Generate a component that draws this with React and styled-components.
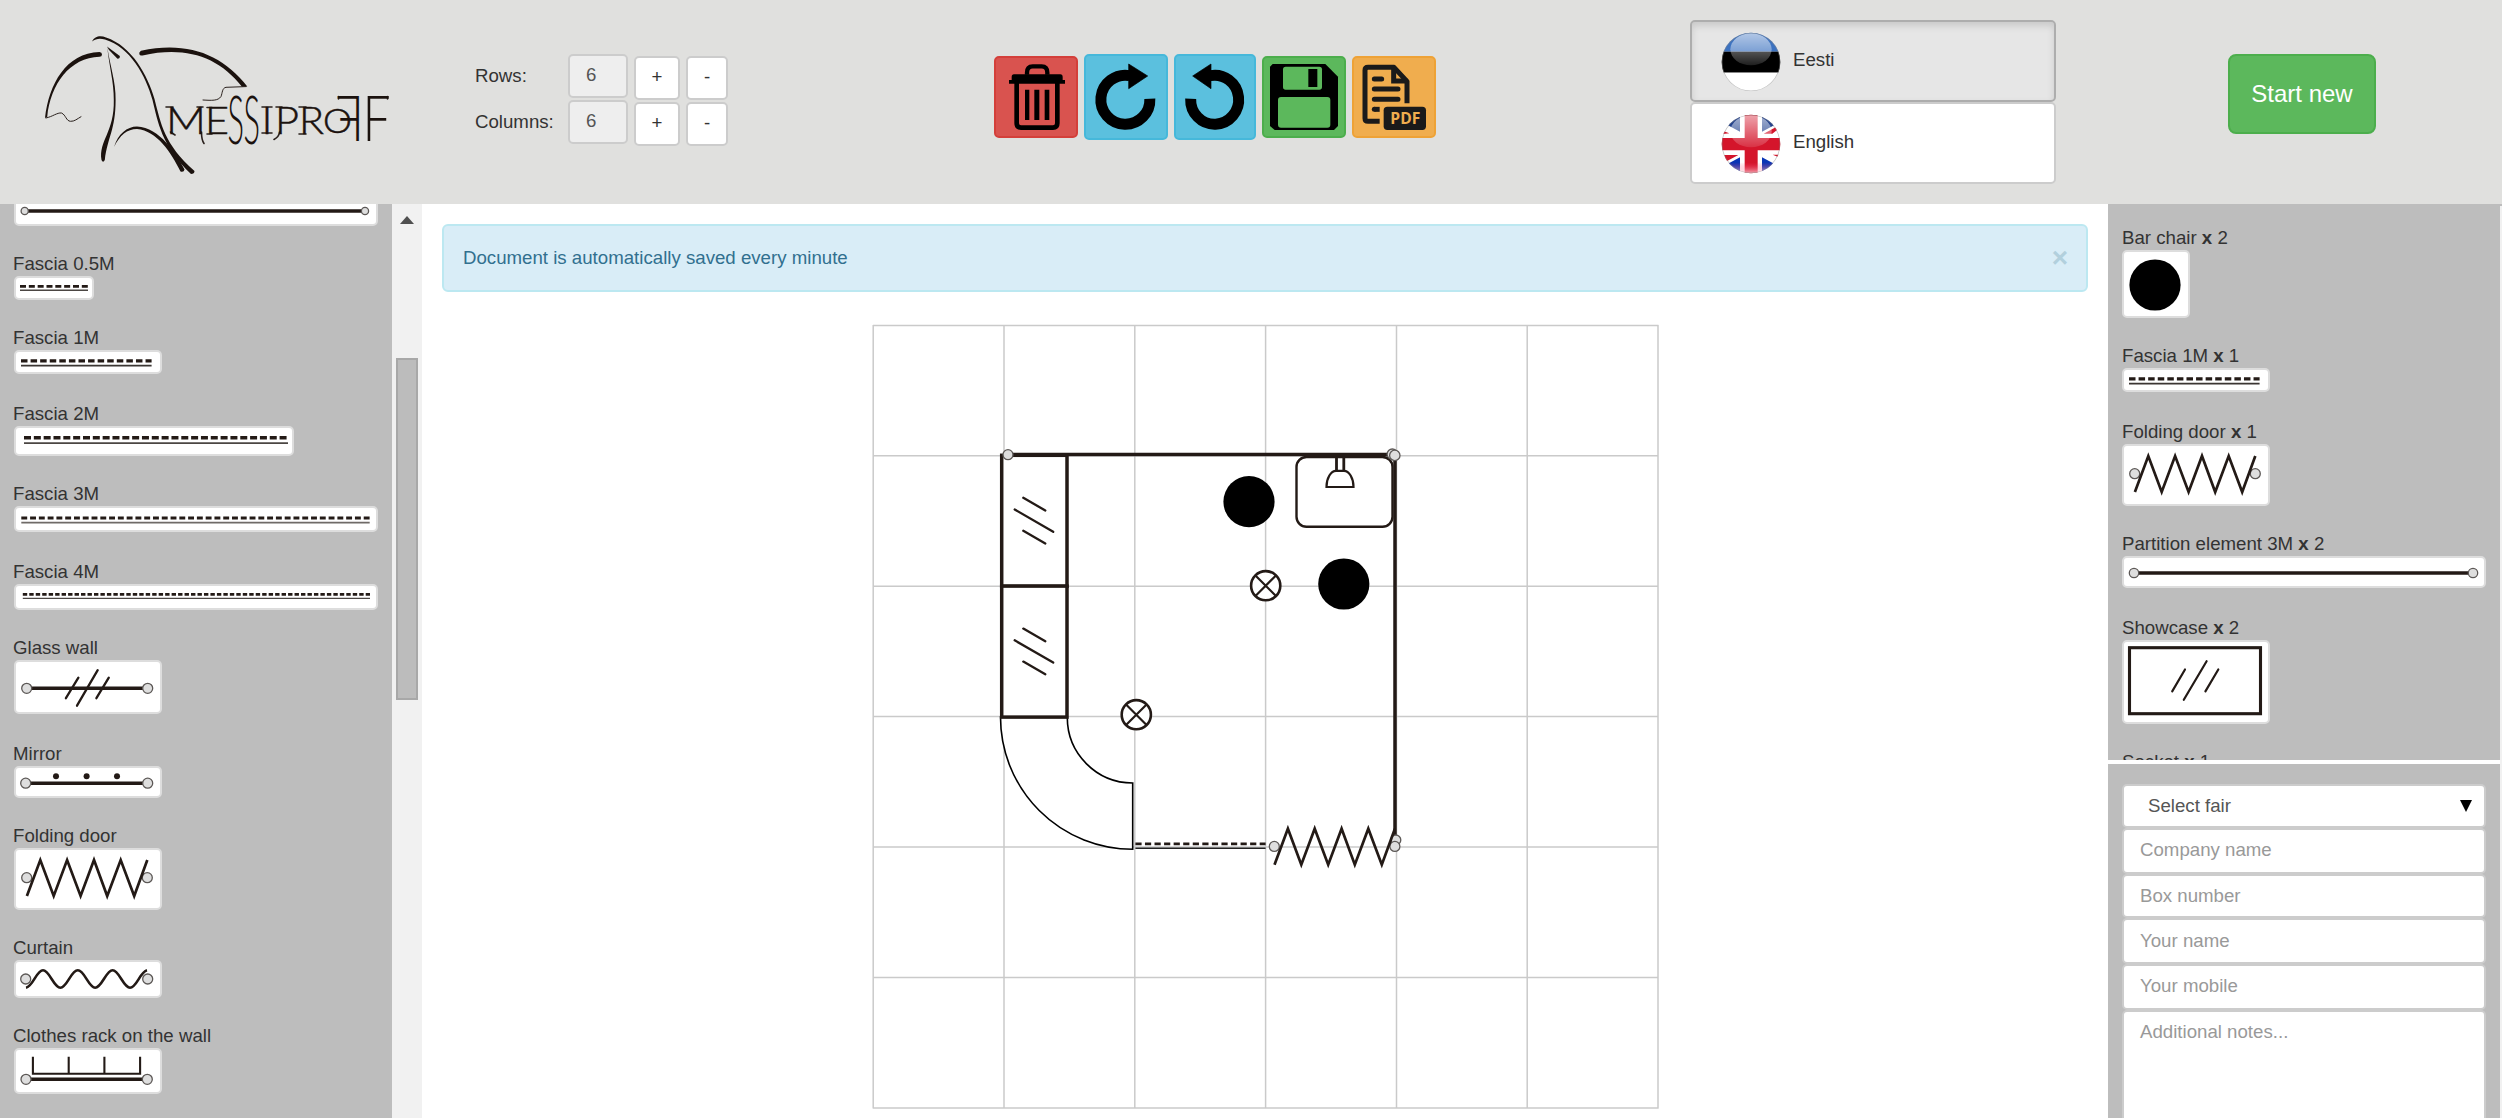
import React from 'react';
import styled, { createGlobalStyle, css } from 'styled-components';

const INK = '#231a16';

const GlobalStyle = createGlobalStyle`
  *, *::before, *::after { box-sizing: border-box; }
  html, body { margin: 0; padding: 0; overflow: hidden; }
  body {
    background: #fff;
    color: #333;
    font-family: "Liberation Sans", Arial, sans-serif;
    font-size: 18.67px;
    line-height: 26px;
  }
  svg { display: block; flex: none; }
`;

const Page = styled.div`
  display: flex;
  flex-direction: column;
  width: 100vw;
  height: 100vh;
  overflow: hidden;
`;

/* ---------- header ---------- */

const Header = styled.header`
  display: grid;
  grid-template-columns: 475px 519px 696px 538px 1fr;
  align-items: start;
  flex: none;
  height: 204px;
  background: #e0e0de;
`;

const SizeControls = styled.div`
  display: grid;
  grid-template-columns: 87px 60px 46px 42px;
  grid-auto-rows: 46px;
  column-gap: 6px;
  align-items: start;
  padding-top: 54px;
`;

const SizeLabel = styled.label`
  line-height: 43px;
`;

const SizeInput = styled.input`
  width: 60px;
  height: 44px;
  padding: 0 16px 2px;
  border: 2px solid #ccc;
  border-radius: 5px;
  background: #eee;
  color: #555;
  font: inherit;
  outline: none;
`;

const StepButton = styled.button`
  height: 44px;
  margin-top: 2px;
  padding: 0 0 2px;
  border: 2px solid #ccc;
  border-radius: 5px;
  background: #fff;
  color: #333;
  font: inherit;
`;

const Toolbar = styled.div`
  display: flex;
  align-items: center;
  gap: 6px;
  padding-top: 54px;
`;

const tones = {
  danger: css`background: #d9534f; border-color: #d43f3a;`,
  info: css`background: #5bc0de; border-color: #46b8da;`,
  success: css`background: #5cb85c; border-color: #4cae4c;`,
  warning: css`background: #f0ad4e; border-color: #eea236;`,
};

const ToolButton = styled.button`
  padding: 0;
  border: 2px solid;
  border-radius: 5px;
  ${(p) => tones[p.$tone]}
`;

const Languages = styled.div`
  display: flex;
  flex-direction: column;
  width: 366px;
  padding-top: 20px;
`;

const LanguageButton = styled.button`
  display: flex;
  align-items: center;
  gap: 12px;
  height: 82px;
  padding: 1px 0 0 29px;
  border: 2px solid ${(p) => (p.$active ? '#adadad' : '#ccc')};
  border-radius: 5px;
  background: ${(p) => (p.$active ? '#e6e6e6' : '#fff')};
  box-shadow: ${(p) => (p.$active ? 'inset 0 4px 7px rgba(0,0,0,.125)' : 'none')};
  color: #333;
  font: inherit;
`;

const LanguageName = styled.span`
  padding-bottom: 4px;
`;

const StartButton = styled.button`
  width: 148px;
  height: 80px;
  margin-top: 54px;
  padding: 0;
  border: 2px solid #4cae4c;
  border-radius: 8px;
  background: #5cb85c;
  color: #fff;
  font: inherit;
  font-size: 24px;
`;

/* ---------- body ---------- */

const Body = styled.div`
  display: flex;
  flex: 1;
  min-height: 0;
`;

const Sidebar = styled.aside`
  display: flex;
  flex-direction: column;
  flex: none;
  width: 392px;
  overflow: hidden;
`;

const Panel = styled.section`
  flex: ${(p) => (p.$height ? 'none' : 1)};
  height: ${(p) => (p.$height ? p.$height + 'px' : 'auto')};
  padding: ${(p) => p.$pad};
  background: #bdbdbd;
  overflow: hidden;
`;

const Divider = styled.div`
  flex: none;
  height: 4px;
  background: #fff;
`;

const List = styled.ul`
  list-style: none;
  margin: ${(p) => (p.$scrolled ? '-10px' : 0)} 0 0;
  padding: 0;
`;

const Item = styled.li`
  margin-bottom: ${(p) => p.$gap}px;
`;

const ItemLabel = styled.div`
  height: 26px;
  margin-left: ${(p) => (p.$counted ? 0 : '-1px')};
  line-height: 28px;
  white-space: nowrap;
`;

const Thumb = styled.div`
  width: ${(p) => p.$w}px;
  height: ${(p) => p.$h}px;
  border: 2px solid #ddd;
  border-radius: 5px;
  background: #fff;
  overflow: hidden;
`;

const Scrollbar = styled.div`
  display: flex;
  flex-direction: column;
  align-items: center;
  flex: none;
  width: 30px;
  padding-top: 12px;
  background: #f1f1f1;
`;

const ScrollThumb = styled.div`
  width: 22px;
  height: 342px;
  margin-top: 134px;
  border: 2px solid #a8a8a8;
  background: #bcbcbc;
`;

const Workspace = styled.main`
  display: flex;
  flex-direction: column;
  align-items: center;
  flex: 1;
  min-width: 0;
  padding: 20px 20px 0;
  background: #fff;
`;

const Alert = styled.div`
  display: flex;
  align-items: center;
  justify-content: space-between;
  align-self: stretch;
  flex: none;
  height: 68px;
  margin-bottom: 28px;
  padding: 0 18px 0 19px;
  border: 2px solid #bce8f1;
  border-radius: 6px;
  background: #d9edf7;
  color: #31708f;
`;

const CloseButton = styled.button`
  padding: 0;
  border: 0;
  background: none;
  color: #b2d0dd;
  font: bold 28px/28px "Liberation Sans", Arial, sans-serif;
`;

const PageEdge = styled.div`
  flex: none;
  width: 2px;
  background: #f1f1f1;
  border-top: 2px solid #bdbdbd;
`;

/* ---------- form ---------- */

const control = css`
  display: block;
  width: 364px;
  height: ${(p) => p.$h}px;
  border: 2px solid #ccc;
  border-radius: 5px;
  background: #fff;
  color: #555;
  font: inherit;
  outline: none;
  &::placeholder { color: #999; opacity: 1; }
`;

const Field = styled.input`
  ${control}
  padding: 0 16px ${(p) => (p.$low ? 0 : 2)}px;
`;

const Notes = styled.textarea`
  ${control}
  padding: 7px 16px;
  resize: none;
`;

const FairSelect = styled.button`
  ${control}
  display: flex;
  align-items: center;
  justify-content: space-between;
  padding: 0 12px 0 24px;
`;

/* ---------- drawing primitives ---------- */

const Joint = ({ x, y, r = 5 }) => (
  <circle cx={x} cy={y} r={r} fill="#dedede" stroke="#5c5856" strokeWidth="1.3" />
);

const Wall = ({ x1, x2, y, r }) => (
  <>
    <path d={`M${x1} ${y}H${x2}`} stroke={INK} strokeWidth="3.4" />
    <Joint x={x1} y={y} r={r} />
    <Joint x={x2} y={y} r={r} />
  </>
);

const Fascia = ({ x1, x2, y, base, dash, pitch, t = 2.8, line = 1.5, tone = '#4b4643' }) => (
  <>
    <path d={`M${x1} ${y}H${x2}`} stroke={INK} strokeWidth={t} strokeDasharray={`${dash} ${pitch - dash}`} />
    <path d={`M${x1} ${base}H${x2}`} stroke={tone} strokeWidth={line} />
  </>
);

const FoldingDoor = () => (
  <>
    <Joint x={12.7} y={29.7} />
    <Joint x={133.3} y={29.7} />
    <path
      d="M12.9 48L26.3 12L39.7 48L53.1 12L66.6 48L80 12L93.2 48L106.7 12L120.2 48L133.3 12"
      fill="none" stroke={INK} strokeWidth="2.7" strokeMiterlimit="10"
    />
  </>
);

const drawings = {
  wallLong: <Wall x1={10.7} x2={351} y={17} r={3.6} />,
  fascia05: <Fascia x1={6} x2={74} y={10.4} base={14.2} dash={6} pitch={8.83} t={2.6} line={1.5} />,
  fascia1: <Fascia x1={7} x2={137.6} y={10.8} base={15.7} dash={6.5} pitch={9.58} t={3.2} line={1.8} tone="#3a3532" />,
  fascia2: <Fascia x1={10} x2={274} y={11.7} base={17.1} dash={7} pitch={9.83} t={3.5} line={1.6} />,
  fascia3: <Fascia x1={7.3} x2={355.7} y={12} base={16.7} dash={5.9} pitch={8.78} t={3.2} line={1.8} tone="#6f6a67" />,
  fascia4: <Fascia x1={8.8} x2={356} y={10.4} base={14.4} dash={4.4} pitch={6.47} t={2.7} line={1.4} />,
  glass: (
    <>
      <Wall x1={12.7} x2={133.7} y={28.3} />
      <path d="M51.9 38.2L64.4 17.7M63 45.7L83.7 10.2M82.4 38.2L94.8 17.7" stroke={INK} strokeWidth="2.3" strokeLinecap="round" />
    </>
  ),
  mirror: (
    <>
      <Wall x1={11.7} x2={133.7} y={17.2} />
      {[42, 72.6, 103].map((x) => <circle key={x} cx={x} cy={10.2} r="3" fill={INK} />)}
    </>
  ),
  folding: <FoldingDoor />,
  curtain: (
    <>
      <Joint x={11.7} y={19} />
      <Joint x={133.7} y={19} />
      <path
        d="M12 27.7C19 26.5 22.5 10.3 29 10.3S39.8 27.7 46.4 27.7S57 10.3 63.8 10.3S74.6 27.7 81.2 27.7S92 10.3 98.6 10.3S109.4 27.7 116 27.7S126 12 133 10.3"
        fill="none" stroke={INK} strokeWidth="2.6"
      />
    </>
  ),
  rack: (
    <>
      <path d="M18.9 8.7V25.7H126.1V8.7M54.7 8.7V25.7M90.4 8.7V25.7" fill="none" stroke={INK} strokeWidth="2.1" />
      <Wall x1={12} x2={133.3} y={31.3} />
    </>
  ),
  chair: <circle cx="33" cy="35" r="25.6" fill="#000" />,
  wall3: <Wall x1={12} x2={351} y={17} r={4.7} />,
  showcase: (
    <>
      <rect x="7.5" y="7.7" width="131" height="66" fill="none" stroke={INK} strokeWidth="3.1" />
      <path d="M50.2 51.4L63 29.5M61.8 59.8L84.6 21.2M83.4 51.4L96.3 29.5" stroke={INK} strokeWidth="2.2" strokeLinecap="round" />
    </>
  ),
};

const palette = [
  { art: 'wallLong', w: 364, h: 32, gap: 24 },
  { name: 'Fascia 0.5M', art: 'fascia05', w: 80, h: 24, gap: 24 },
  { name: 'Fascia 1M', art: 'fascia1', w: 148, h: 24, gap: 26 },
  { name: 'Fascia 2M', art: 'fascia2', w: 280, h: 30, gap: 24 },
  { name: 'Fascia 3M', art: 'fascia3', w: 364, h: 26, gap: 26 },
  { name: 'Fascia 4M', art: 'fascia4', w: 364, h: 26, gap: 24 },
  { name: 'Glass wall', art: 'glass', w: 148, h: 54, gap: 26 },
  { name: 'Mirror', art: 'mirror', w: 148, h: 32, gap: 24 },
  { name: 'Folding door', art: 'folding', w: 148, h: 62, gap: 24 },
  { name: 'Curtain', art: 'curtain', w: 148, h: 38, gap: 24 },
  { name: 'Clothes rack on the wall', art: 'rack', w: 148, h: 46, gap: 24 },
];

const used = [
  { name: 'Bar chair', count: 2, art: 'chair', w: 68, h: 68, gap: 24 },
  { name: 'Fascia 1M', count: 1, art: 'fascia1', w: 148, h: 24, gap: 26 },
  { name: 'Folding door', count: 1, art: 'folding', w: 148, h: 62, gap: 24 },
  { name: 'Partition element 3M', count: 2, art: 'wall3', w: 364, h: 32, gap: 26 },
  { name: 'Showcase', count: 2, art: 'showcase', w: 148, h: 84, gap: 24 },
  { name: 'Socket', count: 1 },
];

const PartList = ({ parts, scrolled }) => (
  <List $scrolled={scrolled}>
    {parts.map((p, i) => (
      <Item key={i} $gap={p.gap || 0}>
        {p.name && (
          <ItemLabel $counted={!!p.count}>
            {p.name}
            {p.count && <> <b>x</b> {p.count}</>}
          </ItemLabel>
        )}
        {p.art && (
          <Thumb $w={p.w} $h={p.h}>
            <svg width={p.w - 4} height={p.h - 4} viewBox={`2 2 ${p.w - 4} ${p.h - 4}`}>
              {drawings[p.art]}
            </svg>
          </Thumb>
        )}
      </Item>
    ))}
  </List>
);

/* ---------- logo and icons ---------- */

const Letter = ({ x, y = 134, w, size = 37.5, weight = 300, heavy, children }) => (
  <text
    x={x} y={y} fontSize={size} fontWeight={weight}
    stroke="#1b120e" strokeWidth={heavy ? 0.5 : 0}
    textLength={w} lengthAdjust="spacingAndGlyphs"
  >
    {children}
  </text>
);

const Logo = () => (
  <svg width="420" height="204" viewBox="0 0 420 204">
    <g fill="#1b120e">
      <path d="M45 118C49 84 66 53 99.500 52Q102 52.300 102 54.500T99.500 56.800C70 57.500 50.500 84 47.200 117Z" />
      <path d="M141 50.800Q138.800 52 139.300 54T142.500 55.400C185 46 218 56 242 86.800L247.300 86.600C222 54 187 41 141 50.800Z" />
      <path d="M92 41.500C95 35.500 101 35.500 106 37.500C132 46 148 76 154.500 99C161 124 164 144 194.500 171Q194.500 174 191 174C161 145 158 122 152.500 100C146 76 130 47 105 39.500C100 38.300 96 38.500 92 41.500Z" />
      <path d="M107.300 47C110 66 116 82 115.600 100C115.600 130 107.500 137 104.800 160Q103 163.500 101.500 160C98.500 141 114.500 132 113.800 100C114 82 109 66 107.300 47Z" />
      <path d="M107 46.500L119.800 56Q120.300 58.500 117.500 58.800L109 50Z" />
      <path d="M114 147C118 134 127 126.500 137 126.500C160 128 176 153 184.500 169.500Q184 172.500 180.500 171.500C171 152 157 131 137 129C127 129 120 135 114 147Z" />
    </g>
    <g fill="none" stroke="#2a211d" strokeLinecap="round">
      <path d="M46 118C53 116.500 57 112.500 61.500 113C66 115 66 121 70.500 121.300C74.500 121.500 77 119 81 116.700" strokeWidth="1" />
      <path d="M246 86.600L226 87.300C222 88 222.500 93 221 96.500C218 101 212 100.500 203 100" strokeWidth="1" />
      <path d="M166 107H173M197 107H203M207 107.500H212M207 134H212M262 107H272M262 133H272M276 107H282M299 107H306M299 134H306" strokeWidth="1.6" />
      <path d="M170.500 132L175 135M201.500 132Q201.500 140 204 143.500M279.500 132Q279 137 274 139.500M338.500 99V96.500M387.500 99V96.500" strokeWidth="1.6" />
    </g>
    <g fill="#1b120e" fontFamily="Lato, sans-serif">
      <Letter x={166} w={40} heavy>M</Letter>
      <Letter x={205} w={24} heavy>E</Letter>
      <Letter x={227.5} y={144} w={16.5} size={67}>S</Letter>
      <Letter x={243.5} y={144} w={16.5} size={67}>S</Letter>
      <Letter x={261.5} w={11} heavy>I</Letter>
      <Letter x={275} w={24} heavy>P</Letter>
      <Letter x={299} w={25} heavy>R</Letter>
      <Letter x={323} y={132.5} w={29} size={34} heavy>O</Letter>
      <text transform="translate(364 141) scale(-1 1)" fontSize="63" fontWeight="300" textLength="28" lengthAdjust="spacingAndGlyphs">F</text>
      <Letter x={362.5} y={141} w={28} size={63}>F</Letter>
    </g>
  </svg>
);

const TrashIcon = () => (
  <svg width="80" height="78" viewBox="48 54 240 234">
    <path d="M141 104V98Q141 79 158 79H185Q202 79 202 98V104" fill="none" stroke="#000" strokeWidth="13" />
    <path d="M102 103H241Q248 103 248 111V120H255V131H87V120H95V111Q95 103 102 103Z" />
    <path d="M110 128V250Q110 263 123 263H219Q232 263 232 250V128" fill="none" stroke="#000" strokeWidth="14" />
    <path d="M135 149h13v91h-13zM163 149h15v91h-15zM194 149h14v91h-14z" />
  </svg>
);

const RedoIcon = () => (
  <svg width="80" height="82" viewBox="318 48 240 246">
    <path d="M509.500 176A73.500 73.500 0 1 1 449 107" fill="none" stroke="#000" strokeWidth="33" />
    <path d="M446 72L503 108L446 146Z" stroke="#000" strokeLinejoin="round" strokeWidth="2" />
  </svg>
);

const UndoIcon = () => (
  <svg width="78" height="82" viewBox="588 48 234 246">
    <path d="M632 176A72 73.500 0 1 0 690 107" fill="none" stroke="#000" strokeWidth="33" />
    <path d="M693 72L638 108L693 146Z" stroke="#000" strokeLinejoin="round" strokeWidth="2" />
  </svg>
);

const SaveIcon = () => (
  <svg width="80" height="78" viewBox="852 54 240 234">
    <path d="M878 72H1036L1074 110V258L1062 270H884L870 258V80Z" />
    <rect x="909" y="80" width="117" height="69" rx="8" fill="#5cb85c" />
    <rect x="985" y="87" width="27" height="54" />
    <rect x="894" y="171" width="157" height="92" rx="9" fill="#5cb85c" />
  </svg>
);

const PdfIcon = () => (
  <svg width="80" height="78" viewBox="1122 54 240 234">
    <g fill="none" stroke="#1a1a1a" strokeWidth="15">
      <path d="M1199 244H1164Q1155 244 1155 235V91Q1155 82 1164 82H1242L1281 124V190" strokeLinejoin="round" />
      <path d="M1241 84V123H1282" />
      <path d="M1183 117H1205M1183 147H1254M1183 178H1254" strokeLinecap="round" />
      <path d="M1199 208H1183" />
    </g>
    <circle cx="1183" cy="208" r="7.500" fill="#1a1a1a" />
    <rect x="1211" y="200" width="127" height="70" rx="11" fill="#1a1a1a" />
    <text x="1231" y="252" fontFamily="'Open Sans', sans-serif" fontWeight="700" fontSize="47" textLength="90" lengthAdjust="spacingAndGlyphs" fill="#f0ad4e">PDF</text>
  </svg>
);

const FlagShine = ({ id }) => (
  <>
    <defs>
      <linearGradient id={id} x1="0" y1="0" x2="0" y2="1">
        <stop offset="0" stopColor="#fff" stopOpacity=".6" />
        <stop offset="1" stopColor="#fff" stopOpacity=".12" />
      </linearGradient>
    </defs>
    <ellipse cx="198" cy="117" rx="62" ry="48" fill={`url(#${id})`} />
    <circle cx="198" cy="155" r="87.500" fill="none" stroke="#888" strokeOpacity=".5" strokeWidth="4" />
  </>
);

const EstonianFlag = () => (
  <svg width="60" height="60" viewBox="108 65 180 180">
    <clipPath id="ee"><circle cx="198" cy="155" r="88" /></clipPath>
    <g clipPath="url(#ee)">
      <rect x="108" y="65" width="180" height="59" fill="#3c72c0" />
      <rect x="108" y="124" width="180" height="63" fill="#000" />
      <rect x="108" y="187" width="180" height="60" fill="#fff" />
      <FlagShine id="eeShine" />
    </g>
  </svg>
);

const BritishFlag = () => (
  <svg width="60" height="60" viewBox="108 65 180 180">
    <defs>
      <clipPath id="gb"><circle cx="198" cy="155" r="88" /></clipPath>
      <linearGradient id="gbGlow" x1="0" y1="0" x2="0" y2="1">
        <stop offset="0" stopColor="#ff3060" stopOpacity="0" />
        <stop offset="1" stopColor="#fff" stopOpacity=".75" />
      </linearGradient>
    </defs>
    <g clipPath="url(#gb)">
      <rect x="108" y="65" width="180" height="180" fill="#fff" />
      <path d="M126 97L165 118V66H140ZM270 97L231 118V66H256Z" fill="#1f3f8c" />
      <path d="M126 216L165 195V245H140ZM270 216L231 195V245H256Z" fill="#0a35b5" />
      <path d="M236 124L272 105L279 111L262 124ZM108 114L133 123L108 126ZM118 188H160L122 208ZM263 187H286V197Z" fill="#d4152b" />
      <path d="M179 65H218V137H288V174H218V245H179V174H108V137H179Z" fill="#d4152b" />
      <rect x="108" y="210" width="180" height="36" fill="url(#gbGlow)" />
      <FlagShine id="gbShine" />
    </g>
  </svg>
);

/* ---------- floor plan ---------- */

const gridX = [873.2, 1004, 1134.8, 1265.6, 1396.5, 1527.2, 1658];
const gridY = [325.4, 455.8, 586.2, 716.6, 847, 977.6, 1108];

const Socket = ({ x, y }) => (
  <g fill="#fff" stroke={INK} strokeWidth="2.6">
    <circle cx={x} cy={y} r="14.600" />
    <path d={`M${x - 10} ${y - 10}l20 20m0 -20l-20 20`} strokeWidth="2.2" />
  </g>
);

const Showcase = ({ y }) => (
  <g stroke={INK}>
    <rect x="1001.700" y={y} width="65.300" height="131" fill="#fff" strokeWidth="3.500" />
    <path
      d={`M1023.300 ${y + 42.500}l22 12.700M1014.700 ${y + 54.200}l38.500 22.300M1023.300 ${y + 75.500}l22 12.700`}
      strokeWidth="2.300" strokeLinecap="round"
    />
  </g>
);

const FloorPlan = () => (
  <svg width="794" height="794" viewBox="868 320 794 794">
    <path
      d={gridX.map((x) => `M${x} 325V1108.500`).join('') + gridY.map((y) => `M873 ${y}H1658.500`).join('')}
      stroke="#cacaca" strokeWidth="1.500"
    />
    <path
      d="M1000.500 717A132.300 132.300 0 0 0 1132.700 849.300V783A65.500 65.500 0 0 1 1067.300 717Z"
      fill="#fff" stroke="#000" strokeWidth="1.600"
    />
    <Showcase y={455.3} />
    <Showcase y={586.1} />
    <rect x="1296.500" y="457" width="96" height="69.800" rx="10" fill="#fff" stroke={INK} strokeWidth="2.400" />
    <path d="M1336.500 458V470M1343.800 458V470" stroke={INK} strokeWidth="2.800" />
    <path d="M1326.500 487C1326.500 478 1331 470.800 1336 470.800H1344C1349 470.800 1353.500 478 1353.500 487Z" fill="#fff" stroke={INK} strokeWidth="2.200" />
    <path d="M1008 454.500H1393" stroke={INK} strokeWidth="3.500" />
    <path d="M1395 455V840" stroke={INK} strokeWidth="3.500" />
    <Joint x={1008} y={454.7} />
    <Joint x={1392.3} y={454.2} r={5.2} />
    <Joint x={1394.8} y={455.4} r={5.2} />
    <Joint x={1395.8} y={840} />
    <circle cx="1249" cy="501.700" r="25.600" />
    <circle cx="1343.800" cy="584" r="25.600" />
    <Socket x={1265.7} y={585.7} />
    <Socket x={1136.3} y={714.7} />
    <Fascia x1={1135.4} x2={1265.6} y={843.8} base={848.3} dash={6.2} pitch={9.56} t={2.7} line={1.5} tone="#222" />
    <g transform="translate(1261.600 816.700)"><FoldingDoor /></g>
  </svg>
);

/* ---------- app ---------- */

const App = () => (
  <Page>
    <GlobalStyle />
    <Header>
      <Logo />
      <SizeControls>
        <SizeLabel>Rows:</SizeLabel>
        <SizeInput defaultValue="6" readOnly />
        <StepButton>+</StepButton>
        <StepButton>-</StepButton>
        <SizeLabel>Columns:</SizeLabel>
        <SizeInput defaultValue="6" readOnly />
        <StepButton>+</StepButton>
        <StepButton>-</StepButton>
      </SizeControls>
      <Toolbar>
        <ToolButton $tone="danger"><TrashIcon /></ToolButton>
        <ToolButton $tone="info"><RedoIcon /></ToolButton>
        <ToolButton $tone="info"><UndoIcon /></ToolButton>
        <ToolButton $tone="success"><SaveIcon /></ToolButton>
        <ToolButton $tone="warning"><PdfIcon /></ToolButton>
      </Toolbar>
      <Languages>
        <LanguageButton $active><EstonianFlag /><LanguageName>Eesti</LanguageName></LanguageButton>
        <LanguageButton><BritishFlag /><LanguageName>English</LanguageName></LanguageButton>
      </Languages>
      <StartButton>Start new</StartButton>
    </Header>
    <Body>
      <Sidebar>
        <Panel $pad="0 14px">
          <PartList parts={palette} scrolled />
        </Panel>
      </Sidebar>
      <Scrollbar>
        <svg width="14" height="8" viewBox="0 0 14 8"><path d="M7 0L14 8H0Z" fill="#505050" /></svg>
        <ScrollThumb />
      </Scrollbar>
      <Workspace>
        <Alert>
          <span>Document is automatically saved every minute</span>
          <CloseButton>×</CloseButton>
        </Alert>
        <FloorPlan />
      </Workspace>
      <Sidebar>
        <Panel $height={556} $pad="20px 14px 0">
          <PartList parts={used} />
        </Panel>
        <Divider />
        <Panel $pad="20px 14px 0">
          <FairSelect $h={44}>
            Select fair
            <svg width="12" height="12" viewBox="0 0 12 12"><path d="M0 0H12L6 12Z" /></svg>
          </FairSelect>
          <Field $h={46} placeholder="Company name" />
          <Field $h={44} $low placeholder="Box number" />
          <Field $h={46} $low placeholder="Your name" />
          <Field $h={46} placeholder="Your mobile" />
          <Notes $h={160} placeholder="Additional notes..." />
        </Panel>
      </Sidebar>
      <PageEdge />
    </Body>
  </Page>
);

export default App;
